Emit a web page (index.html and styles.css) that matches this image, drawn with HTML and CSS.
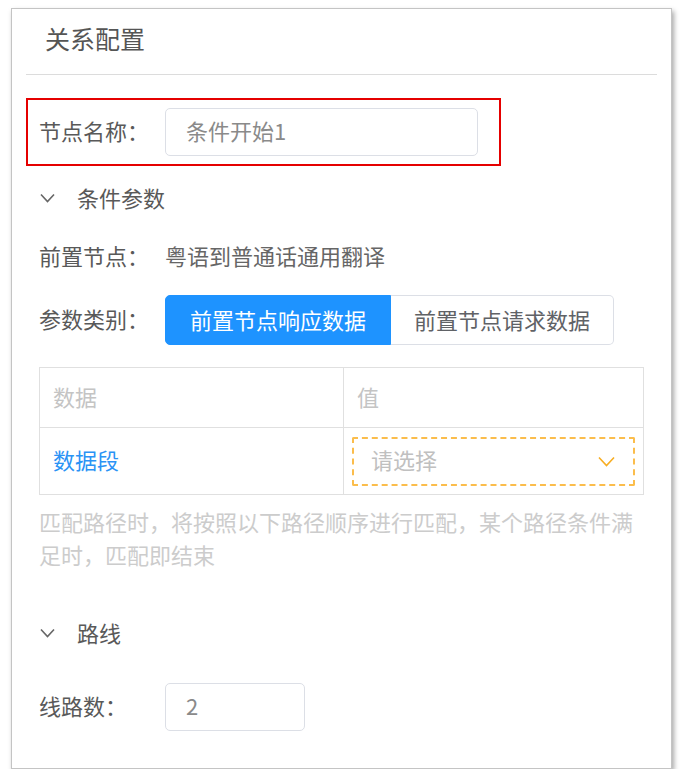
FILE: index.html
```html
<!DOCTYPE html>
<html lang="zh-CN">
<head>
<meta charset="utf-8">
<title>关系配置</title>
<link rel="stylesheet" href="styles.css">
</head>
<body>
<div class="panel">
  <div class="header"><span class="title">关系配置</span></div>
  <div class="body">
    <div class="highlight">
      <div class="row">
        <span class="label">节点名称：</span>
        <div class="input wide"><span class="txt">条件开始1</span></div>
      </div>
    </div>

    <div class="section">
      <svg class="chev" width="15" height="10" viewBox="0 0 15 10"><polyline points="1,1.5 7.5,8.5 14,1.5" fill="none" stroke="#666" stroke-width="1.6"/></svg>
      <span class="section-title">条件参数</span>
    </div>

    <div class="row info">
      <span class="label">前置节点：</span>
      <span class="value">粤语到普通话通用翻译</span>
    </div>

    <div class="row radio-row">
      <span class="label">参数类别：</span>
      <div class="radio-group">
        <span class="radio active">前置节点响应数据</span>
        <span class="radio">前置节点请求数据</span>
      </div>
    </div>

    <table class="grid">
      <thead>
        <tr><th class="col1">数据</th><th>值</th></tr>
      </thead>
      <tbody>
        <tr>
          <td class="col1 link">数据段</td>
          <td class="select-cell">
            <div class="select">
              <span class="placeholder">请选择</span>
              <svg width="17" height="11" viewBox="0 0 17 11"><polyline points="1,1.5 8.5,9.5 16,1.5" fill="none" stroke="#f7ad22" stroke-width="1.6"/></svg>
            </div>
          </td>
        </tr>
      </tbody>
    </table>

    <p class="note">匹配路径时，将按照以下路径顺序进行匹配，某个路径条件满足时，匹配即结束</p>

    <div class="section route">
      <svg class="chev" width="15" height="10" viewBox="0 0 15 10"><polyline points="1,1.5 7.5,8.5 14,1.5" fill="none" stroke="#666" stroke-width="1.6"/></svg>
      <span class="section-title">路线</span>
    </div>

    <div class="row count-row">
      <span class="label">线路数：</span>
      <div class="input small"><span class="txt">2</span></div>
    </div>
  </div>
</div>
</body>
</html>
```
FILE: styles.css
```css
* { box-sizing: border-box; }
html, body { margin: 0; padding: 0; background: #fff; }
body {
  font-family: "Noto Sans CJK SC", "Microsoft YaHei", sans-serif;
  font-size: 22px;
  color: #5c5c5c;
}
.panel {
  margin: 8px 0 0 11px;
  width: 661px;
  height: 761px;
  border: 1px solid #c4c4c4;
  background: #fff;
  box-shadow: 2px 3px 5px rgba(0,0,0,0.35);
}
.header {
  margin: 0 14px;
  height: 66px;
  border-bottom: 1px solid #dcdcdc;
  display: flex;
  align-items: center;
  padding: 0 0 7px 19px;
}
.title {
  font-size: 25px;
  color: #555;
  line-height: 1;
}
.body {
  margin: 0 14px;
  padding: 0 12px 0 13px;
}
.highlight {
  margin: 23px 0 0 -13px;
  width: 475px;
  border: 2px solid #e50000;
  padding: 8px 0 8px 11px;
}
.row {
  display: flex;
  align-items: center;
}
.label {
  width: 126px;
  flex: none;
  line-height: 1;
  color: #595959;
  padding-bottom: 4px;
}
.input {
  height: 48px;
  border: 1px solid #dcdfe6;
  border-radius: 5px;
  padding-left: 20px;
  display: flex;
  align-items: center;
  color: #8a8a8a;
  line-height: 1;
}
.txt { padding-bottom: 4px; }
.input.wide { width: 313px; }
.input.small { width: 140px; }
.section {
  display: flex;
  align-items: center;
  height: 42px;
  margin-top: 12px;
}
.chev { margin-left: 1px; margin-top: -3px; margin-right: 22px; flex: none; }
.section-title { line-height: 1; color: #595959; padding-bottom: 4px; }
.info { height: 42px; margin-top: 16px; }
.value { color: #666; line-height: 1; padding-bottom: 4px; }
.radio-row { margin-top: 17px; height: 50px; }
.radio-group { display: flex; height: 50px; }
.radio {
  display: flex;
  align-items: center;
  justify-content: center;
  height: 50px;
  line-height: 1;
  padding-bottom: 3px;
  border: 1px solid #dcdfe6;
}
.radio.active {
  width: 226px;
  background: #1e93ff;
  border-color: #1e93ff;
  color: #fff;
  border-radius: 5px 0 0 5px;
}
.radio:not(.active) {
  width: 223px;
  border-left: none;
  color: #606266;
  border-radius: 0 5px 5px 0;
}
.grid {
  margin-top: 22px;
  width: 605px;
  border-collapse: collapse;
  table-layout: fixed;
}
.grid th, .grid td {
  border: 1px solid #e0e0e0;
  text-align: left;
  font-weight: normal;
  line-height: 1;
  padding: 0 0 4px 13px;
}
.grid .col1 { width: 304px; }
.grid th { height: 60px; color: #c4c4c4; }
.grid td { height: 67px; }
.grid .link { color: #2a93f5; }
.grid td.select-cell { padding: 8px 8px 8px 8px; }
.select {
  height: 49px;
  border: 2px dashed #fbbd4c;
  border-radius: 2px;
  display: flex;
  align-items: center;
  justify-content: space-between;
  padding: 0 18px 0 17px;
}
.placeholder { color: #c0c0c0; line-height: 1; padding-bottom: 4px; }
.note {
  margin: 10px 0 0 0;
  line-height: 33px;
  color: #cccccc;
}
.route { margin-top: 42px; }
.count-row { margin-top: 28px; }
```
